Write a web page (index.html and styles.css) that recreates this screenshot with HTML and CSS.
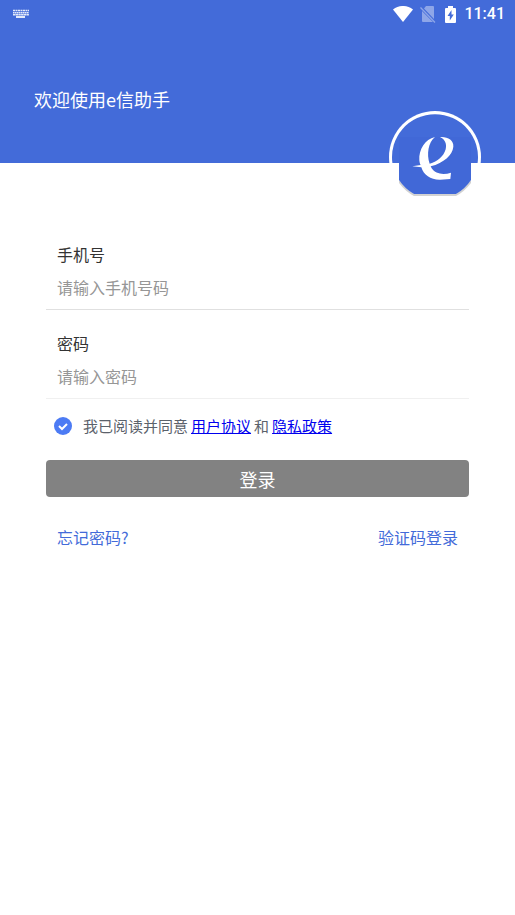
FILE: index.html
```html
<!DOCTYPE html>
<html lang="zh-CN">
<head>
<meta charset="utf-8">
<meta name="viewport" content="width=device-width, initial-scale=1">
<title>e信助手</title>
<link rel="stylesheet" href="styles.css">
</head>
<body>
<header class="hero">
  <div class="status">
    <svg class="keyboard" width="16" height="10" viewBox="0 0 16 10" aria-hidden="true">
      <g fill="none" stroke="currentColor">
        <path d="M0 1.5h16" stroke-width="1.6" stroke-dasharray="2 .5"/>
        <path d="M0 3.7h16" stroke-width="1.6" stroke-dasharray="1.6 .4"/>
        <path d="M0 5.7h16" stroke-width="1.6" stroke-dasharray="2.4 .3"/>
        <path d="M3 8h9" stroke-width="2"/>
      </g>
    </svg>
    <div class="status-right">
      <svg width="20" height="16" viewBox="0 0 20 16" aria-hidden="true"><path fill="#fff" d="M0 3.5C6-1.2 14-1.2 20 3.5L10 16z"/></svg>
      <svg class="nosim" width="16" height="17" viewBox="0 0 16 17" aria-hidden="true"><path fill="currentColor" d="M6 0h7q1 0 1 1v12L4 2.500zM2 5l11 11H3q-1 0-1-1z"/><path d="M.5 1.500l14.500 15" stroke="currentColor" stroke-width="1.300"/></svg>
      <svg class="battery" width="11" height="17" viewBox="0 0 11 17" aria-hidden="true"><path fill="#fff" d="M3 0h5v2h2q1 0 1 1v13q0 1-1 1H1q-1 0-1-1V3q0-1 1-1h2z"/><path fill="#436bd9" d="M6.500 4L2.500 10h2.300v4.500l4-6H6.500z"/></svg>
      <time>11:41</time>
    </div>
  </div>
  <h1>欢迎使用e信助手</h1>
  <svg class="logo" width="92" height="92" viewBox="0 0 92 92" role="img" aria-label="e信助手">
    <circle cx="46" cy="46" r="46" fill="#fff"/>
    <path d="M3.400 52A43 43 0 1 1 88.600 52z" fill="#436bd9"/>
    <path d="M10 69q7 9 15 14h42q8-5 15-14v3q-7 9-15 13H25Q17 81 10 72z" fill="#d2d2d2"/>
    <path d="M10 26H82V69q-6 9-15 14H25Q16 78 10 69z" fill="#4168d7"/>
    <g transform="translate(-9 -6) scale(.33333)"><path fill="#fff" d="M165 96C135 103 116 133 118 166C119 174 120 177 122 180L97 184L124 187C131 211 153 225 181 224L211 222L213 203C190 211 166 207 155 190L152 184C192 173 217 151 220 125C222 105 202 94 180 96C195 103 201 116 197 133C191 154 173 170 149 176C139 147 145 112 165 96z"/></g>
  </svg>
</header>
<main>
  <form>
    <div class="field">
      <label for="phone">手机号</label>
      <input id="phone" type="tel" placeholder="请输入手机号码">
    </div>
    <div class="field second">
      <label for="password">密码</label>
      <input id="password" type="password" placeholder="请输入密码">
    </div>
    <div class="agree">
      <input id="agree" type="checkbox" checked>
      <label for="agree">我已阅读并同意</label>
      <a href="#terms">用户协议</a>
      <span>和</span>
      <a href="#privacy">隐私政策</a>
    </div>
    <button type="button">登录</button>
    <nav>
      <a href="#forgot">忘记密码?</a>
      <a href="#code">验证码登录</a>
    </nav>
  </form>
</main>
</body>
</html>
```
FILE: styles.css
```css
* { box-sizing: border-box; }
body {
  margin: 0;
  background: #fff;
  color: #333;
  font: 16px/24px "Noto Sans CJK SC", sans-serif;
}
.hero {
  position: relative;
  height: 163px;
  background: #436bd9;
  color: #fff;
}
.status {
  display: flex;
  justify-content: space-between;
  align-items: center;
  height: 28px;
  padding: 0 10px 0 13px;
}
.status-right { display: flex; align-items: center; }
.keyboard { color: #e4eafa; }
.nosim { margin-left: 7px; color: #8ea6e8; }
.battery { margin-left: 9px; }
time { margin-left: 8px; font: 500 16px/30px Roboto, sans-serif; }
h1 {
  margin: 57px 0 0 34px;
  font-size: 18px;
  line-height: 28px;
  font-weight: 400;
}
.logo { position: absolute; right: 34px; top: 111px; }
main { padding: 79px 46px 0; }
.field {
  display: flex;
  flex-direction: column;
  gap: 8px;
  padding: 0 11px 9px;
  border-bottom: 1px solid #e0e0e0;
}
.second { margin-top: 21px; border-color: #f0f0f0; }
.field input {
  width: 100%;
  height: 26px;
  padding: 0;
  border: 0;
  outline: 0;
  background: none;
  color: #333;
  font: inherit;
}
.field input::placeholder { color: #969696; opacity: 1; }
.agree {
  display: flex;
  align-items: center;
  gap: 3px;
  margin-top: 15px;
  padding-left: 8px;
  color: #5b626b;
  font-size: 15px;
}
.agree input {
  appearance: none;
  width: 18px;
  height: 18px;
  margin: 0 8px 0 0;
  border-radius: 50%;
  background: #4c7bf4 url("data:image/svg+xml,%3Csvg xmlns='http://www.w3.org/2000/svg' viewBox='0 0 18 18'%3E%3Cpath d='M5 9l3 3 5-5' fill='none' stroke='white' stroke-width='2'/%3E%3C/svg%3E");
}
.agree a { color: #00e; }
button {
  display: block;
  width: 100%;
  height: 37px;
  margin-top: 22px;
  padding: 0;
  border: 0;
  border-radius: 4px;
  background: #828282;
  color: #fff;
  font: 18px/36px "Noto Sans CJK SC", sans-serif;
}
nav {
  display: flex;
  justify-content: space-between;
  margin-top: 28px;
  padding: 0 11px;
}
nav a { color: #436bd9; text-decoration: none; }
```
